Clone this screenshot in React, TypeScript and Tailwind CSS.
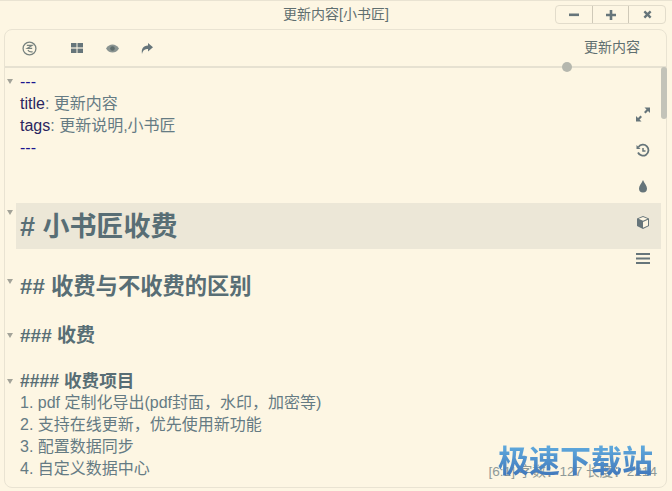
import type { ReactNode } from "react";

const FONT = "font-['Liberation_Sans','Noto_Sans_CJK_SC',sans-serif]";

// one editor line: gutter with optional fold marker, then the text
const Row = ({ fold, children }: { fold?: string; children: ReactNode }) => (
  <div className="flex">
    <div className={`w-[11px] shrink-0 pl-[2px] ${fold ?? ""}`}>
      {fold && <div className="w-0 h-0 border-x-[3px] border-x-transparent border-t-[5px] border-t-[#a3a399]" />}
    </div>
    <div className="flex-1 min-w-0 pl-[4px] mr-[5px]">{children}</div>
  </div>
);

const listItems = [
  "1. pdf 定制化导出(pdf封面，水印，加密等)",
  "2. 支持在线更新，优先使用新功能",
  "3. 配置数据同步",
  "4. 自定义数据中心",
];

export default function App() {
  return (
    <div className={`${FONT} w-[672px] h-[491px] overflow-hidden bg-[#fdf6e3] relative flex flex-col text-[16px]`}>
      {/* title bar */}
      <div className="h-[29px] shrink-0 grid grid-cols-[1fr_auto_1fr] items-center text-[14px] text-[#5f6f70] border-t border-[#e9e3d2]">
        <div />
        <span className="mt-[-1px]">更新内容[小书匠]</span>
        <div className="justify-self-end mr-[6px] mt-[-1px] h-[19px] w-[111px] flex border border-[#e2dccb] rounded-[4px]">
          <div className="flex-1 flex items-center justify-center border-r border-[#cfc9b8]">
            <svg width="10" height="10" viewBox="0 0 10 10"><rect y="3.5" width="10" height="2.6" fill="#66757a" /></svg>
          </div>
          <div className="flex-1 flex items-center justify-center border-r border-[#cfc9b8]">
            <svg width="10" height="10" viewBox="0 0 10 10"><path d="M0 3.7h3.7V0h2.6v3.7H10v2.6H6.3V10H3.7V6.3H0z" fill="#66757a" /></svg>
          </div>
          <div className="flex-1 flex items-center justify-center">
            <svg width="9" height="9" viewBox="0 0 10 10"><path d="M1.5 1.5l7 7M8.5 1.5l-7 7" stroke="#66757a" strokeWidth="2.6" /></svg>
          </div>
        </div>
      </div>

      {/* main panel */}
      <div className="relative flex-1 ml-[4px] mr-[5px] mb-[3px] border border-[#e9e3d2] rounded-[8px] flex flex-col min-h-0">
        <div className="h-[38px] shrink-0 relative border-b-2 border-[#e6e1d1] flex items-center pl-[17px] pr-[26px]">
          <svg width="15" height="15" viewBox="0 0 14 14" fill="none" stroke="#77827f">
            <circle cx="7" cy="7" r="6" strokeWidth="1.2" />
            <path d="M4.5 4h5L5 6.800h4.500M5.500 8.500c1 1.500 2.500 2 4.500 1.500" strokeWidth="1.100" />
          </svg>
          <svg className="ml-[34px]" width="12" height="10" viewBox="0 0 12 10" fill="#66757a">
            <rect width="5.5" height="4.4" /><rect x="6.5" width="5.5" height="4.4" /><rect y="5.6" width="5.5" height="4.4" /><rect x="6.5" y="5.6" width="5.5" height="4.4" />
          </svg>
          <svg className="ml-[23px]" width="13" height="9" viewBox="0 0 13 9">
            <path d="M0 4.5C2 1.5 4 .5 6.5.5S11 1.500 13 4.500C11 7.500 9 8.500 6.500 8.500S2 7.500 0 4.500z" fill="#8a9491" />
            <circle cx="6.500" cy="4.500" r="2.300" fill="#5f6d6c" />
          </svg>
          <svg className="ml-[22px]" width="12" height="11" viewBox="0 0 12 11">
            <path d="M7 0l5 4.300-5 4.200V6C4 6 2 6.800 1 11 0 6 2 2.700 7 2.500z" fill="#66757a" />
          </svg>
          <span className="ml-auto text-[14px] text-[#5f6f70] mt-[-1px]">更新内容</span>
          <span className="absolute right-[94px] bottom-[-6px] w-[10px] h-[10px] rounded-full bg-[#b5b7ae]" />
        </div>

        {/* editor */}
        <div className="relative flex-1 min-h-0 pt-[3px]">
          <div className="leading-[22px]">
            <Row fold="pt-[8px]"><span className="text-[#1a1590]">---</span></Row>
            <Row><span className="text-[#2a2560]">title</span><span className="text-[#657b83]">: 更新内容</span></Row>
            <Row><span className="text-[#2a2560]">tags</span><span className="text-[#657b83]">: 更新说明,小书匠</span></Row>
            <Row><span className="text-[#1a1590]">---</span></Row>
          </div>

          <div className="mt-[44px] font-bold text-[#586e75] flex flex-col">
            <Row fold="pt-[7px]">
              <div className="bg-[#ece7d7] -ml-[4px] pl-[4px] h-[46px] text-[27px] leading-[48px]"># 小书匠收费</div>
            </Row>
            <div className="mt-[20px] text-[22.3px] leading-[36px]">
              <Row fold="pt-[10px]">## 收费与不收费的区别</Row>
            </div>
            <div className="mt-[16px] text-[19px] leading-[30px]">
              <Row fold="pt-[12px]">### 收费</Row>
            </div>
            <div className="mt-[18px] h-[23px] text-[17.6px] leading-[24px]">
              <Row fold="pt-[10px]">#### 收费项目</Row>
            </div>
          </div>

          <div className="leading-[22px] text-[#657b83]">
            {listItems.map((item) => (
              <Row key={item}>{item}</Row>
            ))}
          </div>

          {/* side tools */}
          <div className="absolute right-[15px] top-[39px] w-[16px] flex flex-col items-center gap-[21px]">
            <svg width="14" height="15" viewBox="0 0 14 14" fill="#66757a">
              <path d="M8.500 0H14v5.500L12 3.500 9.500 6 8 4.500 10.500 2zM5.500 14H0V8.500L2 10.500 4.500 8 6 9.500 3.500 12z" />
            </svg>
            <svg width="14" height="15" viewBox="0 0 14 14" fill="none" stroke="#66757a" strokeWidth="1.800">
              <path d="M2.500 3.500A5.500 5.500 0 1 1 2 9" />
              <path d="M7 4.500V7.500H9.500" strokeWidth="1.500" />
              <path d="M.5 1.500v4h4z" fill="#66757a" stroke="none" />
            </svg>
            <svg width="14" height="15" viewBox="0 0 14 14" fill="#66757a">
              <path d="M7 .5C8.500 4 11 6 11 9a4 4 0 0 1-8 0C3 6 5.500 4 7 .5z" />
            </svg>
            <svg width="14" height="15" viewBox="0 0 14 14" fill="none">
              <path d="M7 .5l6 2.500v7.500L7 13.500 1 10.500V3z" fill="#66757a" />
              <path d="M7 6.500l5-2.300v5.700L7 12.200z M2.500 3.300L7 1.500l4.500 1.800L7 5.200z" fill="#fdf6e3" />
            </svg>
            <svg width="14" height="15" viewBox="0 0 14 14" fill="#66757a">
              <rect y="1.500" width="14" height="2" /><rect y="6" width="14" height="2" /><rect y="10.500" width="14" height="2" />
            </svg>
          </div>

          {/* scrollbar */}
          <div className="absolute right-[-1px] top-[-1px] w-[6px] h-[52px] rounded-[3px] bg-[#c3c3b9]" />

          {/* status */}
          <div className="absolute right-[9px] bottom-[7px] text-[13.6px] leading-[16px] text-[#8f9a98]">
            [6:1] 字数：127 长度：2214
          </div>
        </div>
      </div>

      {/* watermark */}
      <div className="absolute left-[498px] top-[443px] text-[31px] leading-[38px] font-bold whitespace-nowrap bg-gradient-to-b from-[#62aee0] to-[#3c6fb5] bg-clip-text text-transparent">
        极速下载站
      </div>
    </div>
  );
}
